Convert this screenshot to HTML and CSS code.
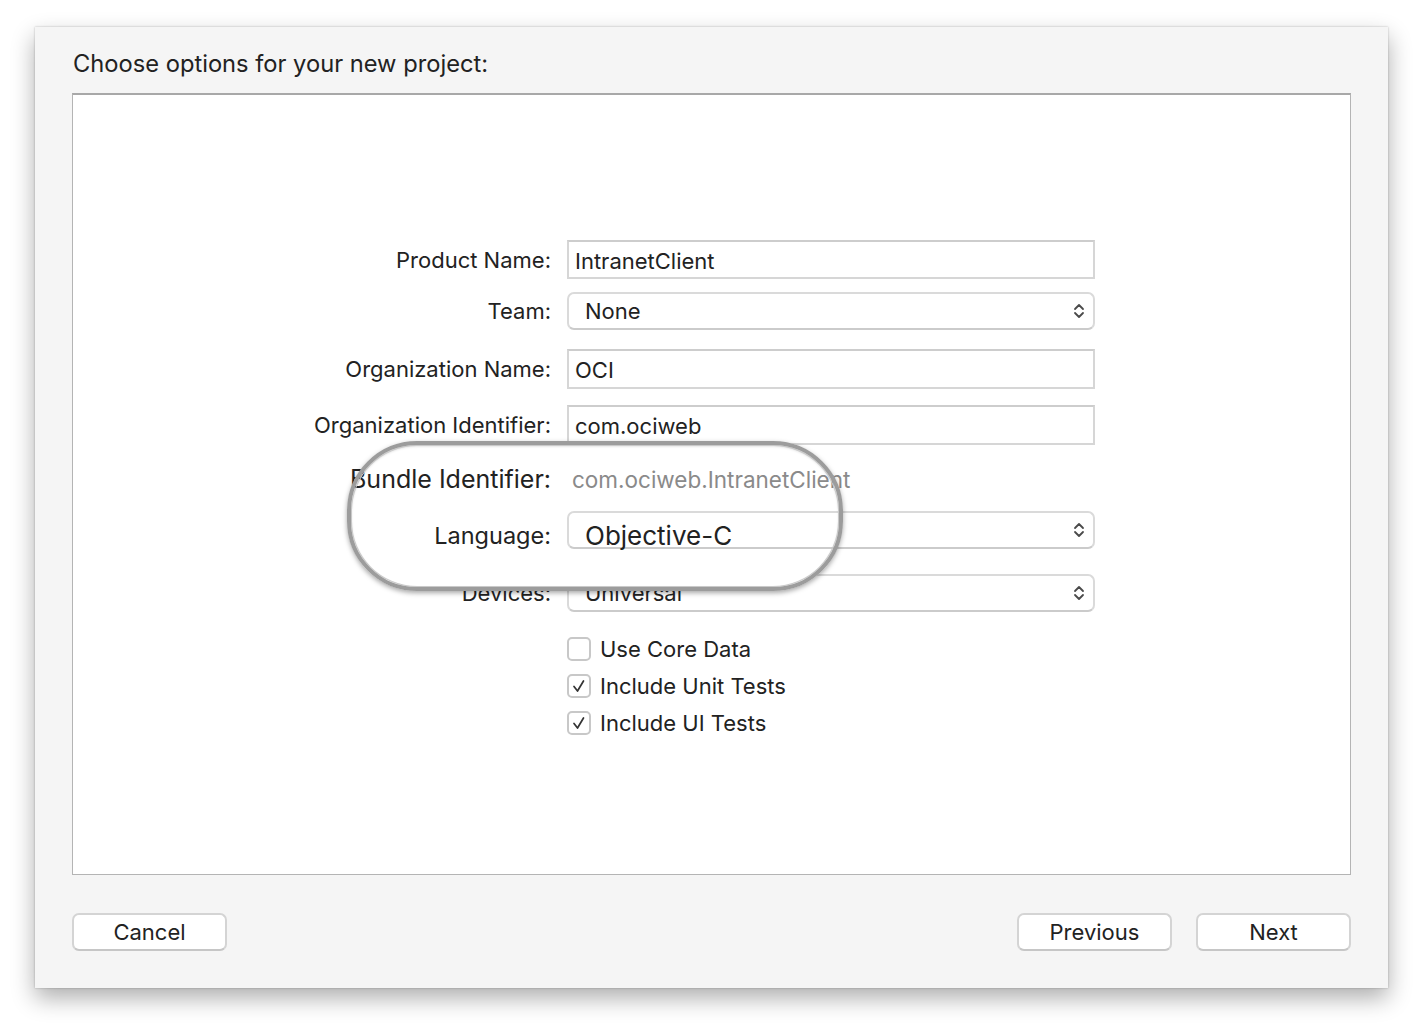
FILE: index.html
```html
<!DOCTYPE html>
<html>
<head>
<meta charset="utf-8">
<link rel="stylesheet" href="styles.css">
</head>
<body>
<div class="window">
  <h1 class="title">Choose options for your new project:</h1>
  <div class="panel">
    <div class="form">
      <div class="row r-product">
        <label class="lbl">Product Name:</label>
        <div class="field">IntranetClient</div>
      </div>
      <div class="row r-team">
        <label class="lbl">Team:</label>
        <div class="popup"><span>None</span><svg class="chev" width="14" height="22" viewBox="0 0 14 22"><path d="M3 9 L7 5 L11 9 M3 13 L7 17 L11 13" fill="none" stroke="#4a4a4a" stroke-width="1.8" stroke-linecap="round" stroke-linejoin="round"/></svg></div>
      </div>
      <div class="row r-org">
        <label class="lbl">Organization Name:</label>
        <div class="field">OCI</div>
      </div>
      <div class="row r-orgid">
        <label class="lbl">Organization Identifier:</label>
        <div class="field">com.ociweb</div>
      </div>
      <div class="row r-bundle above">
        <label class="lbl">Bundle Identifier:</label>
        <div class="value">com.ociweb.IntranetClient</div>
      </div>
      <div class="row r-lang above">
        <label class="lbl">Language:</label>
        <div class="popup big"><span>Objective-C</span><svg class="chev" width="14" height="22" viewBox="0 0 14 22"><path d="M3 9 L7 5 L11 9 M3 13 L7 17 L11 13" fill="none" stroke="#4a4a4a" stroke-width="1.8" stroke-linecap="round" stroke-linejoin="round"/></svg></div>
      </div>
      <div class="row r-dev">
        <label class="lbl">Devices:</label>
        <div class="popup"><span>Universal</span><svg class="chev" width="14" height="22" viewBox="0 0 14 22"><path d="M3 9 L7 5 L11 9 M3 13 L7 17 L11 13" fill="none" stroke="#4a4a4a" stroke-width="1.8" stroke-linecap="round" stroke-linejoin="round"/></svg></div>
      </div>
      <div class="checks">
        <div class="check"><span class="box"></span><span>Use Core Data</span></div>
        <div class="check"><span class="box"><svg width="20" height="20" viewBox="0 0 20 20"><path d="M5 10.5 L8.5 15 L14.5 5" fill="none" stroke="#333" stroke-width="1.7" stroke-linecap="round" stroke-linejoin="round"/></svg></span><span>Include Unit Tests</span></div>
        <div class="check"><span class="box"><svg width="20" height="20" viewBox="0 0 20 20"><path d="M5 10.5 L8.5 15 L14.5 5" fill="none" stroke="#333" stroke-width="1.7" stroke-linecap="round" stroke-linejoin="round"/></svg></span><span>Include UI Tests</span></div>
      </div>
    </div>
    <div class="lens"></div>
  </div>
  <div class="buttons">
    <button class="btn">Cancel</button>
    <div class="spacer"></div>
    <button class="btn">Previous</button>
    <button class="btn">Next</button>
  </div>
</div>
</body>
</html>
```

FILE: styles.css
```css
html, body {
  margin: 0;
  padding: 0;
  background: #ffffff;
}
body {
  font-family: Inter, "Liberation Sans", sans-serif;
  color: #262626;
  min-height: 1032px;
  padding-top: 27px;
  box-sizing: border-box;
}
.window {
  box-sizing: border-box;
  margin: 0 0 0 35px;
  width: 1353px;
  height: 961px;
  background: #f5f5f5;
  padding: 0 37px 0 37px;
  box-shadow: 0 10px 22px rgba(0,0,0,0.32), 0 0 2px rgba(0,0,0,0.25);
  display: flex;
  flex-direction: column;
}
.title {
  margin: 22px 0 14px 1px;
  font-size: 23.7px;
  font-weight: 400;
  line-height: 30px;
  height: 30px;
  color: #222;
}
.panel {
  position: relative;
  box-sizing: border-box;
  width: 1279px;
  height: 782px;
  background: #fff;
  border: 1px solid #b4b4b4;
  border-top: 2px solid #a8a8a8;
}
.form {
  padding-top: 145px;
  display: flex;
  flex-direction: column;
}
.row {
  display: grid;
  grid-template-columns: 478px 528px;
  column-gap: 16px;
  align-items: center;
}
.above {
  position: relative;
  z-index: 2;
}
.lbl {
  text-align: right;
  font-size: 22px;
  color: #222;
}
.field {
  box-sizing: border-box;
  height: 40px;
  border: 2px solid #d6d6d6;
  border-top-color: #cdcdcd;
  background: #fff;
  padding-left: 6px;
  font-size: 22px;
  line-height: 38px;
  color: #222;
}
.r-product .field { height: 39px; line-height: 38px; }
.popup {
  box-sizing: border-box;
  height: 38px;
  border: 2px solid #dadada;
  border-bottom-color: #cbcbcb;
  border-radius: 7px;
  background: #fff;
  display: flex;
  align-items: center;
  justify-content: space-between;
  padding: 0 7px 0 16px;
  font-size: 22px;
  color: #222;
}
.popup.big { font-size: 26px; }
.popup.big span { line-height: 26px; padding-top: 12px; }
.chev { flex: none; }
.value {
  font-size: 22.5px;
  color: #8a8a8a;
  padding-left: 5px;
}
.r-bundle .lbl { font-size: 25px; }
.r-lang { height: 38px; }
.r-lang .lbl { font-size: 23.5px; line-height: 26px; padding-top: 12px; }
.r-team { margin-top: 13px; }
.r-org { margin-top: 19px; }
.r-orgid { margin-top: 16px; }
.r-bundle { margin-top: 15px; height: 38px; }
.r-lang { margin-top: 13px; }
.r-dev { margin-top: 25px; }
.checks {
  margin: 25px 0 0 494px;
  display: flex;
  flex-direction: column;
  gap: 13px;
}
.check {
  display: flex;
  align-items: center;
  gap: 9px;
  height: 24px;
  font-size: 22px;
  color: #222;
}
.box {
  box-sizing: border-box;
  width: 24px;
  height: 24px;
  border: 2px solid #c8c8c8;
  border-radius: 5px;
  background: #fff;
  display: flex;
  align-items: center;
  justify-content: center;
}
.lens {
  position: absolute;
  left: 274px;
  top: 346px;
  width: 496px;
  height: 150px;
}
.lens::before {
  content: "";
  position: absolute;
  inset: 0;
  border-radius: 70px;
  background: #fff;
  z-index: 1;
}
.lens::after {
  content: "";
  position: absolute;
  inset: 0;
  box-sizing: border-box;
  border-radius: 70px;
  border: 4px solid #9c9c9c;
  box-shadow: 0 2px 5px rgba(0,0,0,0.35), inset 0 0 0 1px #c9c9c9, inset 0 1px 3px rgba(0,0,0,0.2);
  z-index: 3;
}
.buttons {
  margin-top: 38px;
  display: flex;
  gap: 24px;
}
.spacer { flex: 1; }
.btn {
  box-sizing: border-box;
  width: 155px;
  height: 38px;
  border: 2px solid #d4d4d4;
  border-bottom-color: #c6c6c6;
  border-radius: 7px;
  background: #fff;
  font-family: Inter, "Liberation Sans", sans-serif;
  font-size: 22px;
  color: #222;
  padding: 0;
}
```
